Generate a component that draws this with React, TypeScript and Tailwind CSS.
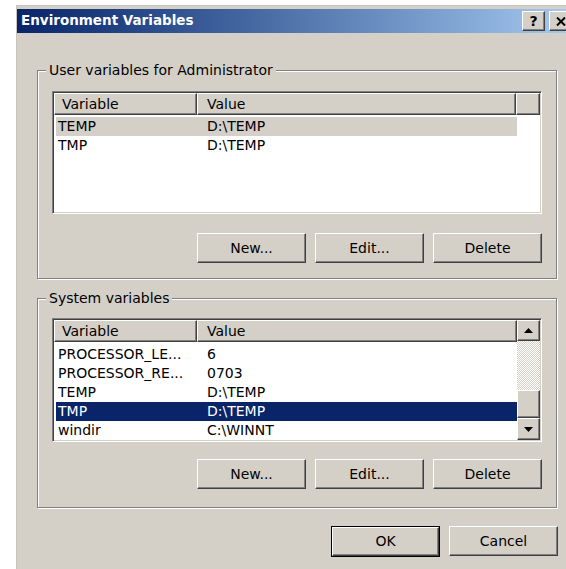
import type { ReactNode } from 'react';

type Row = { name: string; value: string; state?: 'active' | 'inactive' };

const userVars: Row[] = [
  { name: 'TEMP', value: 'D:\\TEMP', state: 'inactive' },
  { name: 'TMP', value: 'D:\\TEMP' },
];

const systemVars: Row[] = [
  { name: 'PROCESSOR_LE...', value: '6' },
  { name: 'PROCESSOR_RE...', value: '0703' },
  { name: 'TEMP', value: 'D:\\TEMP' },
  { name: 'TMP', value: 'D:\\TEMP', state: 'active' },
  { name: 'windir', value: 'C:\\WINNT' },
];

// classic 3D bevel used by buttons, header items and scroll parts
const raised =
  'bg-[#d4d0c8] border border-t-white border-l-white border-r-[#404040] border-b-[#404040] shadow-[inset_-1px_-1px_0_#808080]';

const Button = ({ children, isDefault }: { children: ReactNode; isDefault?: boolean }) => (
  <div className={isDefault ? 'w-[109px] h-[31px] border border-black flex' : 'w-[109px] h-[30px] flex'}>
    <div className={`flex-1 flex items-center justify-center text-[14px] text-black ${raised}`}>{children}</div>
  </div>
);

const Arrow = ({ down }: { down?: boolean }) => (
  <svg width="9" height="5" viewBox="0 0 9 5">
    <polygon points={down ? '0,0 9,0 4.5,5' : '4.5,0 9,5 0,5'} fill="#000" />
  </svg>
);

const ScrollBar = () => (
  <div className="w-[23px] flex flex-col">
    <div className={`h-[21px] flex items-center justify-center ${raised}`}>
      <Arrow />
    </div>
    <div className="flex-1 bg-[repeating-conic-gradient(#d4d0c8_0_25%,#ffffff_0_50%)] bg-[length:2px_2px]" />
    <div className={`h-[28px] ${raised}`} />
    <div className={`h-[22px] flex items-center justify-center ${raised}`}>
      <Arrow down />
    </div>
  </div>
);

const ListView = ({ rows, tall, scroll }: { rows: Row[]; tall?: boolean; scroll?: boolean }) => (
  <div
    className={`w-[490px] ${tall ? 'h-[124px]' : 'h-[123px]'} bg-white border border-t-[#808080] border-l-[#808080] border-b-white border-r-white shadow-[inset_1px_1px_0_#404040,inset_-1px_-1px_0_#d4d0c8] p-[1px] flex`}
  >
    <div className="flex-1 flex flex-col overflow-hidden">
      <div className="h-[22px] flex shrink-0">
        <div className={`w-[143px] pl-[7px] flex items-center ${raised}`}>Variable</div>
        <div className={`${scroll ? 'flex-1' : 'w-[319px]'} pl-[9px] flex items-center ${raised}`}>Value</div>
        {!scroll && <div className={`flex-1 ${raised}`} />}
      </div>
      <div className={tall ? 'pt-[3px]' : 'pt-[2px]'}>
        {rows.map((r) => (
          <div
            key={r.name}
            className={`ml-[2px] w-[461px] h-[19px] flex items-center ${
              r.state === 'active' ? 'bg-[#0a246a] text-white' : r.state === 'inactive' ? 'bg-[#d4d0c8] text-black' : 'text-black'
            }`}
          >
            <span className="w-[141px] pl-[2px] truncate">{r.name}</span>
            <span className="pl-[10px]">{r.value}</span>
          </div>
        ))}
      </div>
    </div>
    {scroll && <ScrollBar />}
  </div>
);

const GroupBox = ({ label, tall, children }: { label: string; tall?: boolean; children: ReactNode }) => (
  <div
    className={`relative w-[520px] ${tall ? 'h-[210px] pt-[19px]' : 'h-[209px] pt-[20px]'} pl-[14px] border border-[#808080] shadow-[inset_1px_1px_0_#fff,1px_1px_0_#fff]`}
  >
    <span className="absolute -top-[9px] left-[8px] px-[3px] bg-[#d4d0c8] leading-[16px]">{label}</span>
    {children}
  </div>
);

const ButtonRow = ({ gap }: { gap: string }) => (
  <div className={`w-[490px] flex justify-end gap-[9px] ${gap}`}>
    <Button>New...</Button>
    <Button>Edit...</Button>
    <Button>Delete</Button>
  </div>
);

export default function App() {
  return (
    <div className="w-[566px] h-[569px] overflow-hidden bg-white font-['DejaVu_Sans',sans-serif] text-[14px] text-black pt-[5px] pl-[16px]">
      <div className="w-[557px] h-[600px] bg-[#d4d0c8] border-l border-t border-[#c8c4bc] pt-[3px]">
        {/* title bar */}
        <div className="h-[24px] flex items-center bg-linear-to-r from-[#0a246a] to-[#a6caf0] pl-[4px] pr-[1px]">
          <span className="text-white font-bold text-[13.5px] leading-none">Environment Variables</span>
          <div className="ml-auto flex gap-[4px]">
            <div className={`w-[23px] h-[20px] flex items-center justify-center font-bold text-[14px] leading-none ${raised}`}>?</div>
            <div className={`w-[23px] h-[20px] flex items-center justify-center ${raised}`}>
              <svg width="10" height="9" viewBox="0 0 10 9">
                <path d="M1 0.5 L9 8.5 M9 0.5 L1 8.5" stroke="#000" strokeWidth="2" />
              </svg>
            </div>
          </div>
        </div>

        <div className="pl-[20px] pt-[37px]">
          <GroupBox label="User variables for Administrator">
            <ListView rows={userVars} />
            <ButtonRow gap="mt-[19px]" />
          </GroupBox>

          <div className="mt-[19px]">
            <GroupBox label="System variables" tall>
              <ListView rows={systemVars} tall scroll />
              <ButtonRow gap="mt-[17px]" />
            </GroupBox>
          </div>

          <div className="w-[521px] mt-[18px] flex justify-end gap-[9px]">
            <Button isDefault>OK</Button>
            <Button>Cancel</Button>
          </div>
        </div>
      </div>
    </div>
  );
}
